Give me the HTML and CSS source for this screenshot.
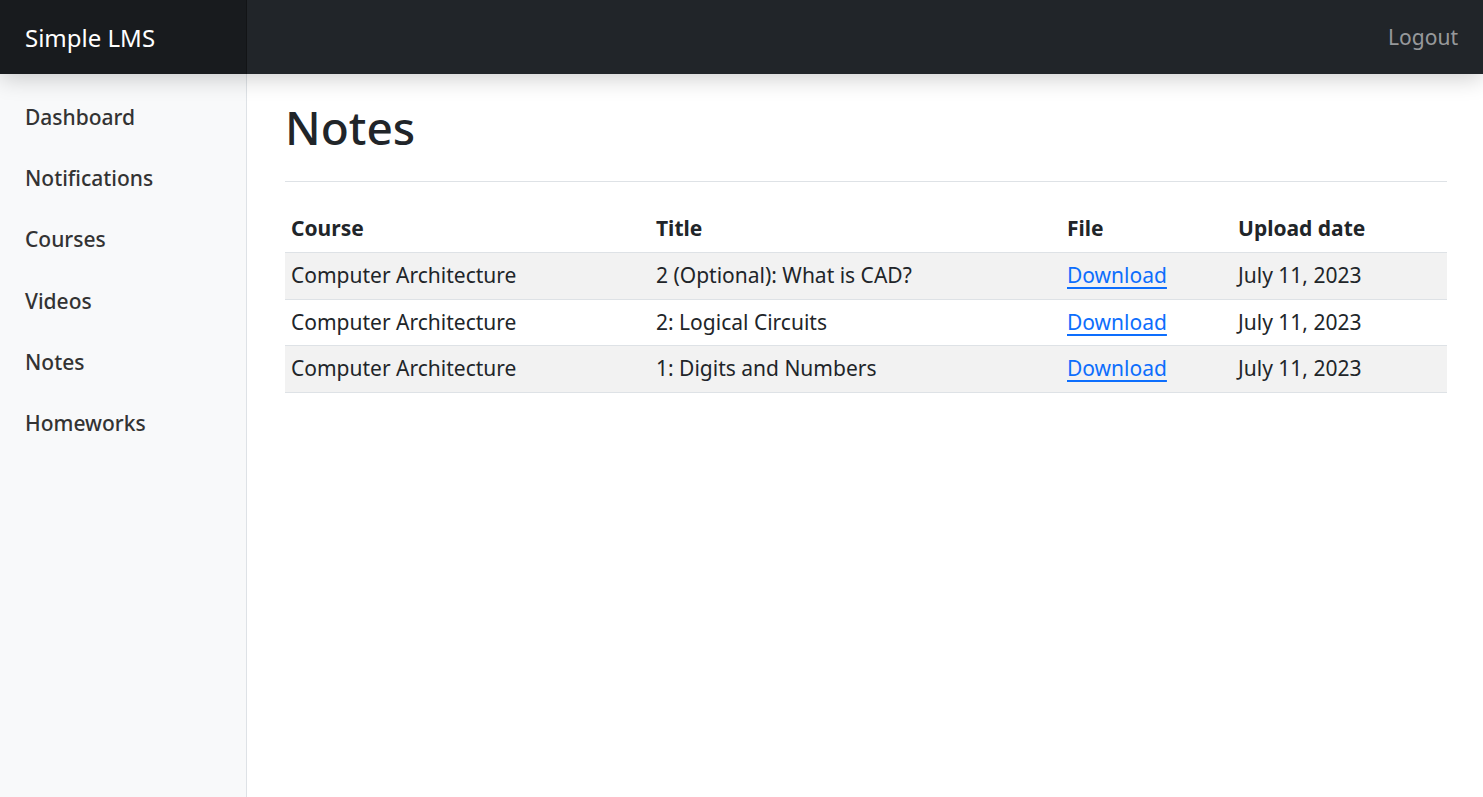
FILE: index.html
```html
<!DOCTYPE html>
<html lang="en">
<head>
<meta charset="utf-8">
<title>Notes - Simple LMS</title>
<link rel="stylesheet" href="styles.css">
</head>
<body>
<header class="navbar">
  <a class="brand" href="#">Simple LMS</a>
  <a class="logout" href="#">Logout</a>
</header>
<div class="layout">
  <nav class="sidebar">
    <ul class="side-nav">
      <li><a href="#">Dashboard</a></li>
      <li><a href="#">Notifications</a></li>
      <li><a href="#">Courses</a></li>
      <li><a href="#">Videos</a></li>
      <li><a href="#">Notes</a></li>
      <li><a href="#">Homeworks</a></li>
    </ul>
  </nav>
  <main class="main">
    <div class="page-head">
      <h1>Notes</h1>
    </div>
    <table class="table">
      <thead>
        <tr><th class="c1">Course</th><th class="c2">Title</th><th class="c3">File</th><th>Upload date</th></tr>
      </thead>
      <tbody>
        <tr><td>Computer Architecture</td><td>2 (Optional): What is CAD?</td><td><a href="#">Download</a></td><td>July 11, 2023</td></tr>
        <tr><td>Computer Architecture</td><td>2: Logical Circuits</td><td><a href="#">Download</a></td><td>July 11, 2023</td></tr>
        <tr><td>Computer Architecture</td><td>1: Digits and Numbers</td><td><a href="#">Download</a></td><td>July 11, 2023</td></tr>
      </tbody>
    </table>
  </main>
</div>
</body>
</html>
```

FILE: styles.css
```css
* { box-sizing: border-box; }
html, body { margin: 0; padding: 0; height: 100%; }
body {
  font-family: "Noto Sans", "Open Sans", sans-serif;
  font-size: 21px;
  line-height: 1.5;
  color: #212529;
  background: #fff;
  overflow: hidden;
}
a { text-decoration: none; }
.navbar {
  position: relative;
  z-index: 3;
  height: 74px;
  display: flex;
  align-items: stretch;
  justify-content: space-between;
  background: #212529;
  box-shadow: 0 4px 22px rgba(0,0,0,.2);
}
.brand {
  width: 247px;
  display: flex;
  align-items: center;
  padding-left: 25px;
  padding-top: 2px;
  font-size: 24px;
  color: #fff;
  background: rgba(0,0,0,.25);
  box-shadow: inset -1px 0 0 rgba(0,0,0,.25);
}
.logout {
  display: flex;
  align-items: center;
  padding-right: 25px;
  padding-top: 2px;
  font-size: 21px;
  color: rgba(255,255,255,.55);
}
.layout {
  display: flex;
  height: calc(100% - 74px);
}
.sidebar {
  width: 247px;
  flex: none;
  background: #f8f9fa;
  border-right: 1px solid #dee2e6;
  padding-top: 12px;
}
.side-nav { list-style: none; margin: 0; padding: 0; }
.side-nav a {
  display: block;
  padding: 16px 25px 15.2px;
  font-size: 21px;
  font-weight: 500;
  line-height: 30px;
  color: #333;
}
.main {
  flex: 1;
  padding: 0 36px 0 38px;
}
.page-head {
  padding-top: 25px;
  padding-bottom: 26px;
  border-bottom: 1px solid #dee2e6;
  margin-bottom: 32px;
}
h1 {
  margin: 0;
  font-size: 46px;
  font-weight: 500;
  line-height: 56px;
}
.table {
  width: 100%;
  border-collapse: collapse;
}
.table th, .table td {
  text-align: left;
  padding: 8px 6px;
  line-height: 29.4px;
  border-bottom: 1px solid #dee2e6;
}
.table th { font-weight: 700; padding-top: 0; padding-bottom: 9px; }
.table tbody tr:nth-child(odd) td { background: #f2f2f2; }
.c1 { width: 365px; }
.c2 { width: 411px; }
.c3 { width: 171px; }
.table a { color: #0d6efd; text-decoration: underline; text-underline-offset: 4px; text-decoration-thickness: 2px; }
```
